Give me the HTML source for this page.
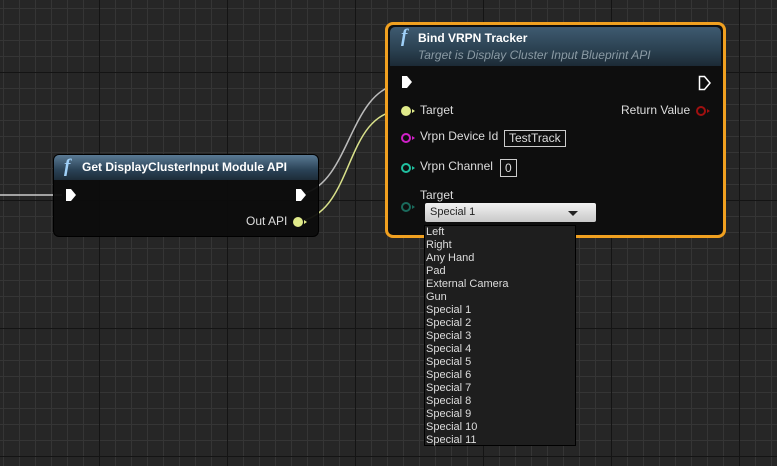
<!DOCTYPE html>
<html><head><style>
body{margin:0;width:777px;height:466px;overflow:hidden;background:#262626;font-family:"Liberation Sans",sans-serif;position:relative}
.grid{position:absolute;inset:0;
background-image:
linear-gradient(90deg,#141414 1px,transparent 1px),
linear-gradient(#141414 1px,transparent 1px),
linear-gradient(90deg,#353535 1px,transparent 1px),
linear-gradient(#353535 1px,transparent 1px);
background-size:128px 128px,128px 128px,16px 16px,16px 16px;
background-position:99px 0,0 72px,3px 0,0 8px}
.t{position:absolute;color:#ddd;font-size:12px;white-space:nowrap}
.node{position:absolute;background:rgba(12,12,12,0.95);border-radius:6px;border:1px solid #000}
.hdr{position:absolute;left:0;right:0;top:0;border-radius:5px 5px 0 0;background:linear-gradient(#5a7a94,#2a4256 60%,#1d2c38)}
.f{font-family:"Liberation Serif",serif;font-style:italic;font-weight:bold;color:#9fd0f8;font-size:19px;position:absolute}
.list div{height:13px;line-height:13px;font-size:11px;color:#ddd;padding-left:1px}
</style></head><body>
<div class="grid"></div>
<svg style="position:absolute;left:0;top:0" width="777" height="466">
<path d="M0 195 L62 195" stroke="#ccc" stroke-width="1.5" fill="none"/>
<path d="M305 193 C350 180,350 90,400 84" stroke="#bbb" stroke-width="1.5" fill="none"/>
<path d="M305 220 C355 205,345 110,404 110" stroke="#d8e08a" stroke-width="1.5" fill="none"/>
</svg>
<div class="node" style="left:53px;top:154px;width:264px;height:81px">
 <div class="hdr" style="height:25px"></div>
 <div class="f" style="left:10px;top:1px">f</div>
 <div class="t" style="left:28px;top:5px;font-weight:bold;color:#fff">Get DisplayClusterInput Module API</div>
 <svg style="position:absolute;left:11px;top:33px" width="12" height="14"><path d="M1 1H6L11 7L6 13H1Z" fill="#fff"/></svg>
 <svg style="position:absolute;left:241px;top:33px" width="12" height="14"><path d="M1 1H6L11 7L6 13H1Z" fill="#fff"/></svg>
 <div class="t" style="left:192px;top:59px">Out API</div>
 <svg style="position:absolute;left:238px;top:60px" width="16" height="14"><circle cx="6" cy="7" r="5" fill="#e0ea8a"/><path d="M12 5L15 7L12 9Z" fill="#e0ea8a"/></svg>
</div>
<div style="position:absolute;left:385px;top:22px;width:335px;height:210px;border:3px solid #f0a020;border-radius:8px;background:#0e0e0e">
 <div class="hdr" style="height:39px;left:2px;right:2px;top:2px;background:linear-gradient(#3e5a70,#2a4050 60%,#1c2a35)"></div>
 <div class="f" style="left:13px;top:1px">f</div>
 <div class="t" style="left:30px;top:6px;font-weight:bold;color:#fff">Bind VRPN Tracker</div>
 <div class="t" style="left:30px;top:23px;font-style:italic;color:#8a9aa4">Target is Display Cluster Input Blueprint API</div>
 <svg style="position:absolute;left:13px;top:50px" width="12" height="14"><path d="M1 1H6L11 7L6 13H1Z" fill="#fff"/></svg>
 <svg style="position:absolute;left:310px;top:50px" width="14" height="16"><path d="M1.5 1.5H6.5L12 8L6.5 14.5H1.5Z" fill="none" stroke="#fff" stroke-width="1.5"/></svg>
 <svg style="position:absolute;left:12px;top:79px" width="16" height="14"><circle cx="6" cy="7" r="5" fill="#e0ea8a"/><path d="M12 5L15 7L12 9Z" fill="#e0ea8a"/></svg>
 <div class="t" style="left:32px;top:78px">Target</div>
 <div class="t" style="left:233px;top:78px">Return Value</div>
 <svg style="position:absolute;left:307px;top:79px" width="16" height="14"><circle cx="6" cy="7" r="4" fill="none" stroke="#a01010" stroke-width="2"/><path d="M12 5L15 7L12 9Z" fill="#a01010"/></svg>
 <svg style="position:absolute;left:12px;top:106px" width="16" height="14"><circle cx="6" cy="7" r="4" fill="none" stroke="#d020c8" stroke-width="2"/><path d="M12 5L15 7L12 9Z" fill="#d020c8"/></svg>
 <div class="t" style="left:32px;top:104px">Vrpn Device Id</div>
 <div class="t" style="left:116px;top:105px;border:1px solid #ccc;padding:0 4px;line-height:15px">TestTrack</div>
 <svg style="position:absolute;left:12px;top:136px" width="16" height="14"><circle cx="6" cy="7" r="4" fill="none" stroke="#20c0a0" stroke-width="2"/><path d="M12 5L15 7L12 9Z" fill="#20c0a0"/></svg>
 <div class="t" style="left:32px;top:134px">Vrpn Channel</div>
 <div class="t" style="left:112px;top:134px;border:1px solid #ccc;padding:0 4px;line-height:16px">0</div>
 <svg style="position:absolute;left:12px;top:175px" width="16" height="14"><circle cx="6" cy="7" r="4" fill="none" stroke="#1a6a5c" stroke-width="2"/><path d="M12 5L15 7L12 9Z" fill="#1a6a5c"/></svg>
 <div class="t" style="left:32px;top:163px">Target</div>
</div>
<div style="position:absolute;left:425px;top:203px;width:171px;height:19px;background:linear-gradient(#f2f2f2,#c8c8c8);border-radius:2px">
 <div class="t" style="left:5px;top:3px;color:#222;font-size:11px">Special 1</div>
 <svg style="position:absolute;left:143px;top:8px" width="10" height="6"><path d="M0 0H10L5 5Z" fill="#222"/></svg>
</div>
<div class="list" style="position:absolute;left:424px;top:225px;width:150px;height:219px;background:#1e1e1e;border:1px solid #000;padding-top:0">
<div>Left</div><div>Right</div><div>Any Hand</div><div>Pad</div><div>External Camera</div><div>Gun</div><div>Special 1</div><div>Special 2</div><div>Special 3</div><div>Special 4</div><div>Special 5</div><div>Special 6</div><div>Special 7</div><div>Special 8</div><div>Special 9</div><div>Special 10</div><div>Special 11</div>
</div>
</body></html>
